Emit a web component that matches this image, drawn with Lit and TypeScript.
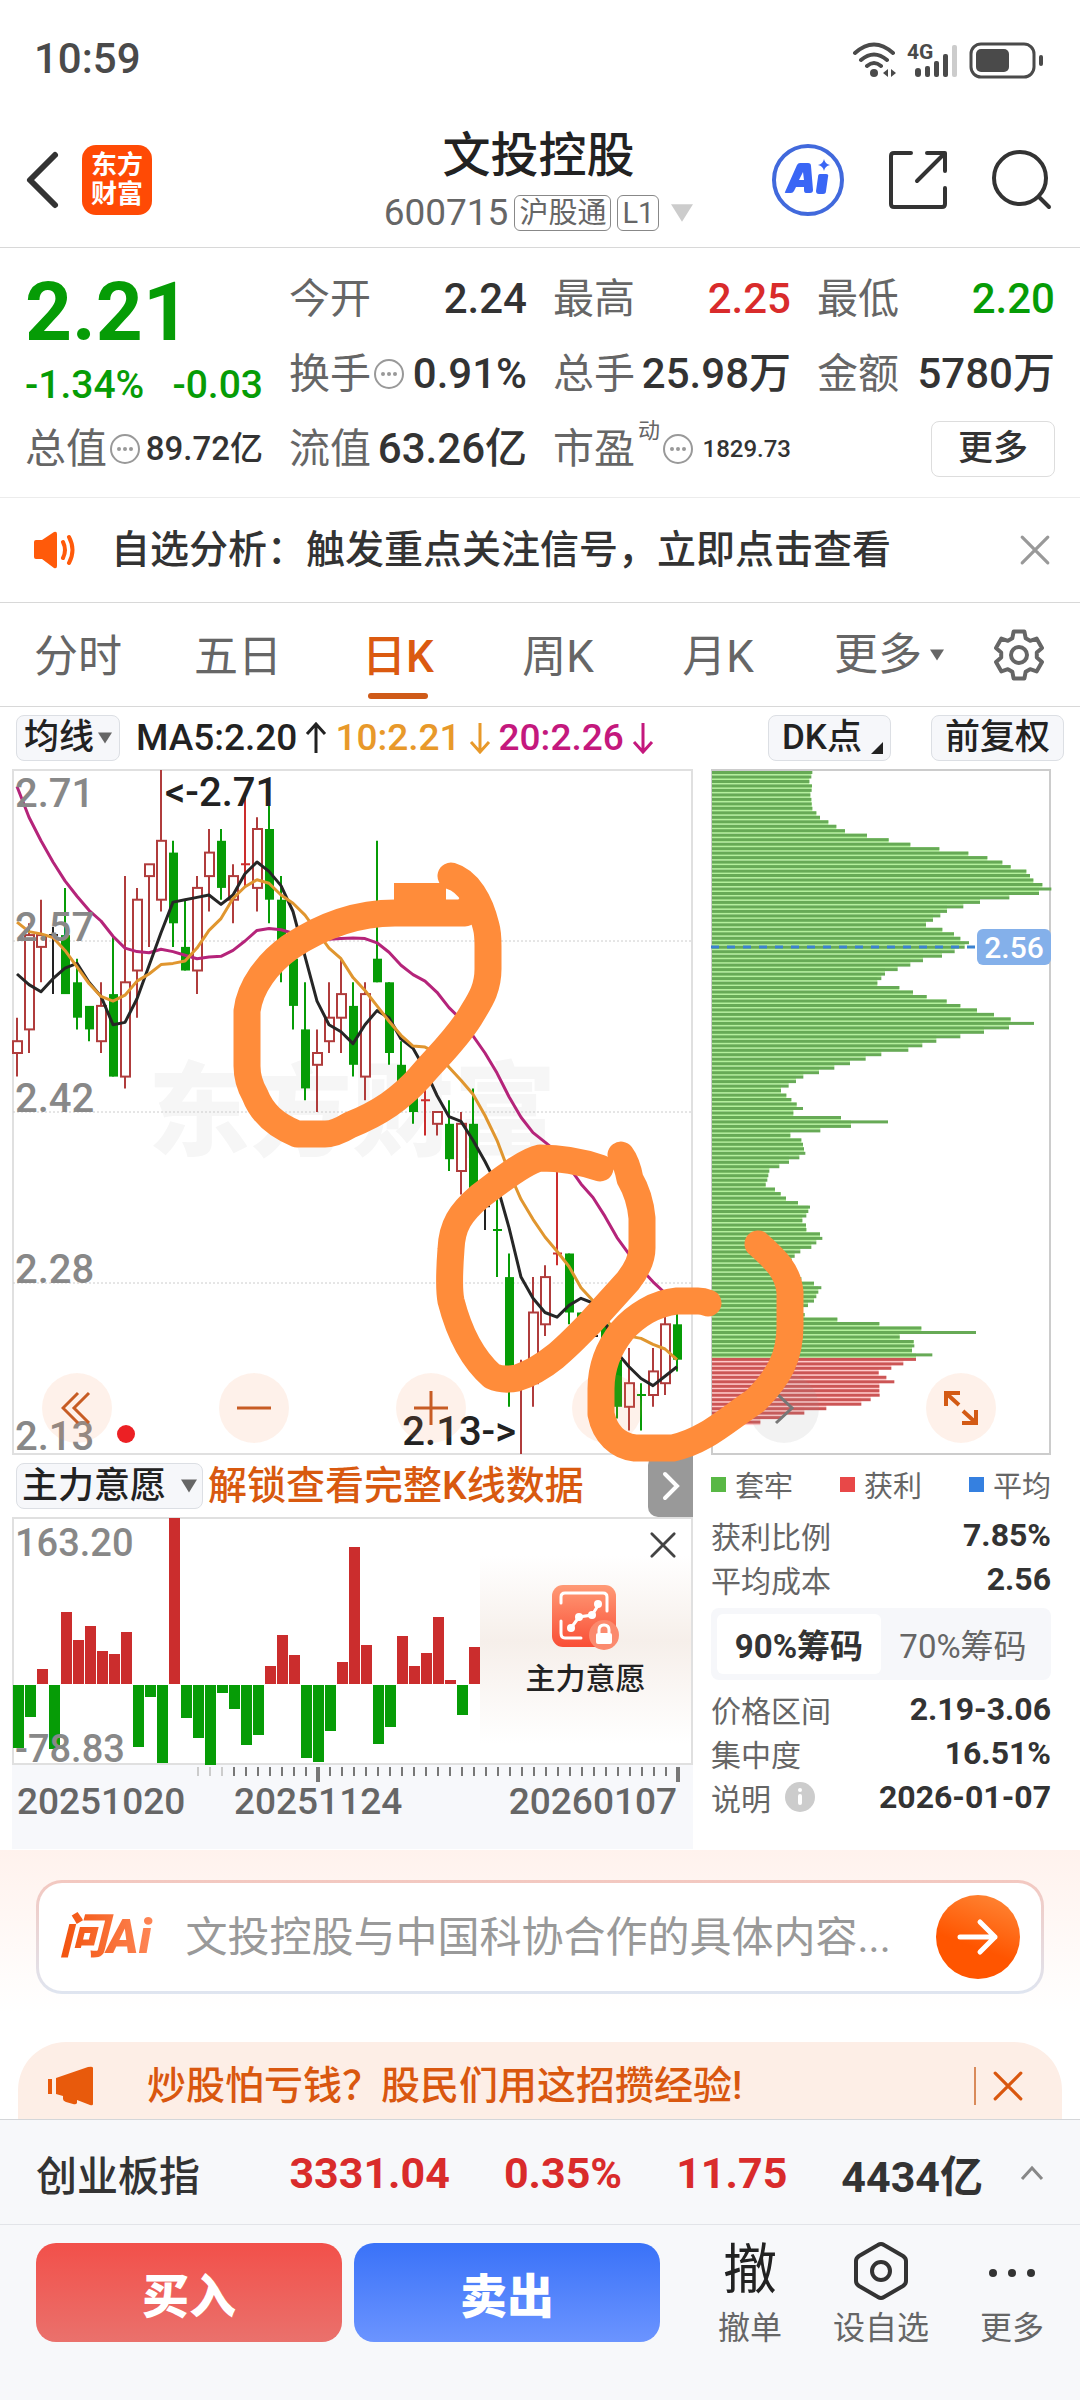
import { LitElement, html, svg, css } from "lit";
import { customElement, state } from "lit/decorators.js";

/* ---------- market data ---------- */

// open, close, high, low for each trading day
const CANDLES: [number, number, number, number][] = [
  [2.47, 2.48, 2.5, 2.45], [2.49, 2.57, 2.58, 2.47], [2.56, 2.57, 2.6, 2.53], [2.57, 2.57, 2.577, 2.52],
  [2.57, 2.52, 2.61, 2.52], [2.53, 2.5, 2.55, 2.49], [2.51, 2.49, 2.51, 2.48], [2.48, 2.51, 2.53, 2.47],
  [2.52, 2.45, 2.57, 2.45], [2.45, 2.53, 2.62, 2.44], [2.54, 2.6, 2.61, 2.5], [2.62, 2.63, 2.63, 2.56],
  [2.6, 2.65, 2.71, 2.59], [2.64, 2.58, 2.65, 2.56], [2.56, 2.54, 2.6, 2.54], [2.54, 2.61, 2.62, 2.52],
  [2.62, 2.64, 2.66, 2.59], [2.65, 2.61, 2.66, 2.6], [2.6, 2.62, 2.63, 2.58], [2.63, 2.63, 2.69, 2.61],
  [2.61, 2.66, 2.67, 2.59], [2.66, 2.6, 2.68, 2.58], [2.6, 2.55, 2.62, 2.53], [2.55, 2.51, 2.55, 2.49],
  [2.49, 2.44, 2.53, 2.43], [2.46, 2.47, 2.49, 2.42], [2.48, 2.5, 2.53, 2.47], [2.5, 2.52, 2.55, 2.47],
  [2.51, 2.46, 2.53, 2.45], [2.45, 2.52, 2.53, 2.43], [2.55, 2.53, 2.65, 2.53], [2.53, 2.47, 2.53, 2.46],
  [2.46, 2.43, 2.48, 2.43], [2.45, 2.42, 2.45, 2.41], [2.43, 2.43, 2.45, 2.4], [2.41, 2.42, 2.42, 2.4],
  [2.41, 2.38, 2.43, 2.37], [2.37, 2.41, 2.42, 2.35], [2.41, 2.34, 2.44, 2.34], [2.34, 2.34, 2.35, 2.32],
  [2.32, 2.32, 2.35, 2.28], [2.28, 2.2, 2.3, 2.17], [2.19, 2.2, 2.21, 2.13], [2.19, 2.25, 2.28, 2.17],
  [2.24, 2.28, 2.29, 2.23], [2.3, 2.3, 2.38, 2.29], [2.3, 2.25, 2.3, 2.24], [2.25, 2.23, 2.25, 2.22],
  [2.23, 2.23, 2.24, 2.23], [2.24, 2.2, 2.25, 2.2], [2.21, 2.17, 2.22, 2.16], [2.17, 2.19, 2.22, 2.15],
  [2.18, 2.18, 2.19, 2.15], [2.18, 2.2, 2.22, 2.17], [2.19, 2.24, 2.25, 2.18], [2.24, 2.21, 2.25, 2.2],
];
const FLAT_RED = new Set([19, 34, 45]);
const FLAT_GREEN = new Set([40, 52]);

// averages for the first days, whose window starts before the visible range
const MA5_HEAD = [2.537, 2.528, 2.522, 2.533];
const MA10_HEAD = [2.581, 2.573, 2.571, 2.568, 2.557, 2.543, 2.529, 2.518, 2.514];
const MA20_HEAD = [
  2.696, 2.67, 2.65, 2.632, 2.616, 2.603, 2.591, 2.582, 2.569, 2.559,
  2.556, 2.555, 2.558, 2.556, 2.553, 2.55, 2.5515, 2.552, 2.557,
];

// shares held at each price level, in thirds of a chart unit
const CHIPS_RAW = [
  301, 298, 292, 300, 299, 295, 298, 299, 301, 313, 324, 349, 373, 399, 465, 530, 595, 682, 769, 826, 871, 896, 943, 954,
  964, 991, 1018, 981, 892, 804, 754, 705, 685, 663, 642, 691, 726, 745, 771, 758, 728, 690, 633, 595, 557, 519, 508, 496,
  562, 603, 644, 704, 745, 795, 846, 896, 966, 891, 816, 745, 673, 631, 589, 508, 461, 414, 367, 321, 274, 252, 230, 207,
  223, 238, 254, 273, 244, 387, 528, 417, 325, 235, 268, 273, 276, 280, 262, 231, 202, 172, 169, 166, 161, 189, 206, 222,
  258, 294, 289, 283, 271, 282, 283, 324, 331, 313, 298, 265, 248, 240, 236, 240, 252, 268, 306, 328, 319, 313, 306, 288,
  273, 278, 376, 502, 628, 792, 563, 605, 607, 600, 661, 612, 574, 538, 500, 523, 547, 502, 502, 503, 476, 448, 343, 277,
  210, 145,
];
const CHIPS_IN_LOSS = 131;

const INTENT = [
  -63, -32, 15, -64, 72, 44, 58, 33, 30, 52, -62, -12, -78, 166, -33, -53, -80, -8, -24, -60, -50, 18, 49, 29, -73, -77,
  -46, 22, 137, 39, -59, -42, 48, 18, 31, 67, 4, -30, 37, 14,
];

const RED = "#cb2d2d";
const GREEN = "#069c06";

const movingAverage = (days: number, head: number[]) =>
  CANDLES.map((_, i) =>
    i < days - 1 ? head[i] : CANDLES.slice(i - days + 1, i + 1).reduce((sum, c) => sum + c[1], 0) / days
  );

const px = (i: number) => 5 + i * 12;
const py = (price: number) => Math.round((2.71 - price) * 11793) / 10 + 1;
const points = (values: number[]) => values.map((v, i) => `${px(i)},${py(v)}`).join(" ");

/* ---------- icons ---------- */

const gearPoints = Array.from({ length: 6 }, (_, k) =>
  [[-22, 18], [-13, 24], [13, 24], [22, 18]].map(([da, r]) => {
    const a = ((k * 60 - 90 + da) * Math.PI) / 180;
    return `${(27 + r * Math.cos(a)).toFixed(1)},${(27 + r * Math.sin(a)).toFixed(1)}`;
  }).join(" ")
).join(" ");

const icon = {
  back: html`<svg width="36" height="60" viewBox="0 0 36 60" fill="none" stroke="#333" stroke-width="6" stroke-linecap="round" stroke-linejoin="round"><path d="M31 5 6 30 31 55" /></svg>`,
  ai: html`<svg width="74" height="74" viewBox="0 0 74 74"><circle cx="37" cy="37" r="34" fill="#fff" stroke="#4169dc" stroke-width="4" />
    <path fill="#3a66f5" fill-rule="evenodd" d="M14 49 26 22q1-2 3-2h8q3 0 3 3l2 24q0 3-3 3h-4q-2 0-2-3v-3h-8l-2 4q-1 2-3 2h-4q-3 0-2-1zM28 37h5l-1-8z" />
    <path fill="#3a66f5" d="M49 31h6q3 0 2 3l-2 14q0 3-3 3h-4q-3 0-3-3l2-14q0-3 2-3zM53 16q1 5 6 6-5 1-6 6-1-5-6-6 5-1 6-6z" /></svg>`,
  share: html`<svg width="60" height="60" viewBox="0 0 60 60" fill="none" stroke="#333" stroke-width="4" stroke-linecap="round" stroke-linejoin="round"><path d="M23 3H6q-3 0-3 3v48q0 3 3 3h48q3 0 3-3V38M39 3h18v18M56 4 29 31" /></svg>`,
  search: html`<svg width="62" height="62" viewBox="0 0 62 62" fill="none" stroke="#333" stroke-width="4" stroke-linecap="round"><circle cx="29" cy="29" r="26" /><path d="M48 48 58 58" /></svg>`,
  status: html`<svg width="192" height="40" viewBox="0 0 192 40">
    <g fill="none" stroke="#4a4a4a" stroke-width="4" stroke-linecap="round"><path d="M3 14q19-17 38 0M9 21q13-11 26 0M15 27q7-6 14 0" /></g>
    <circle cx="22" cy="34" r="4" fill="#4a4a4a" /><path d="M31 34l5-4v8zM44 34l-5-4v8z" fill="#4a4a4a" />
    <text x="55" y="20" font-family="Roboto, sans-serif" font-size="21" font-weight="700" fill="#4a4a4a">4G</text>
    <g fill="#4a4a4a"><rect x="63" y="29" width="6" height="9" rx="3" /><rect x="73" y="27" width="5" height="11" rx="2" /><rect x="82" y="22" width="5" height="16" rx="2" /><rect x="91" y="15" width="5" height="23" rx="2" /></g>
    <rect x="100" y="6" width="5" height="32" rx="2" fill="#ccc" />
    <rect x="119" y="5" width="63" height="33" rx="10" fill="none" stroke="#4a4a4a" stroke-width="3" />
    <rect x="124" y="10" width="33" height="23" rx="5" fill="#4a4a4a" /><rect x="187" y="16" width="4" height="11" rx="2" fill="#4a4a4a" /></svg>`,
  speaker: html`<svg width="46" height="38" viewBox="0 0 46 38"><path d="M2 11q0-2 2-2h6L22 1q3-1 3 2v32q0 3-3 2L10 28H4q-2 0-2-2z" fill="#ff5a0a" /><path d="M31 11q4 8 0 16M37 6q7 13 0 26" fill="none" stroke="#ff5a0a" stroke-width="4" stroke-linecap="round" /></svg>`,
  gear: html`<svg width="54" height="54" viewBox="0 0 54 54" fill="none" stroke="#666" stroke-width="4" stroke-linejoin="round"><polygon points="${gearPoints}" /><circle cx="27" cy="27" r="8" /></svg>`,
  note: html`<svg width="30" height="30" viewBox="0 0 30 30"><circle cx="15" cy="15" r="14" fill="none" stroke="#999" stroke-width="2" /><g fill="#999"><circle cx="9" cy="15" r="2" /><circle cx="15" cy="15" r="2" /><circle cx="21" cy="15" r="2" /></g></svg>`,
  send: html`<svg width="42" height="38" viewBox="0 0 42 38" fill="none" stroke="#fff" stroke-width="5" stroke-linecap="round" stroke-linejoin="round"><path d="M3 19h35M23 4l15 15-15 15" /></svg>`,
  horn: html`<svg width="46" height="40" viewBox="0 0 46 40" fill="#e85a0c"><path d="M0 13h4v15H0zM8 12 40 1q5-1 5 1v36q0 2-3 1l-13-5v3q-1 2-4 1l-7-2q-3-1-3-3v-3l-7-2z" /></svg>`,
  lock: html`<svg width="68" height="68" viewBox="0 0 68 68"><defs><linearGradient id="lg" x1="0" y1="0" x2="0" y2="1"><stop offset="0" stop-color="#ff9a76" /><stop offset="1" stop-color="#f94e36" /></linearGradient></defs>
    <rect x="1" y="2" width="64" height="62" rx="11" fill="url(#lg)" />
    <path d="M10 20v-6q0-4 4-4h38q4 0 4 4v14M10 38v12q0 5 4 5h16" fill="none" stroke="#fff" stroke-width="3" stroke-linecap="round" />
    <path d="M20 45 28 34 41 32 48 21" fill="none" stroke="#fff" stroke-width="3" /><g fill="#fff"><circle cx="20" cy="45" r="4" /><circle cx="28" cy="34" r="4" /><circle cx="41" cy="32" r="4" /><circle cx="47" cy="21" r="4" /></g>
    <circle cx="53" cy="52" r="15" fill="#fb8a6e" /><rect x="45" y="50" width="16" height="11" rx="2" fill="#fff" /><path d="M48 50v-3q0-5 5-5t5 5v3" fill="none" stroke="#fff" stroke-width="3" /></svg>`,
  hex: html`<svg width="56" height="60" viewBox="0 0 56 60" fill="none" stroke="#333" stroke-width="4" stroke-linejoin="round"><path d="M25 4q3-2 6 0l19 11q3 2 3 5v20q0 3-3 5L31 56q-3 2-6 0L6 45q-3-2-3-5V20q0-3 3-5z" /><circle cx="28" cy="30" r="9" /></svg>`,
  dots: html`<svg width="50" height="60" viewBox="0 0 50 60" fill="#333"><circle cx="6" cy="32" r="4" /><circle cx="25" cy="32" r="4" /><circle cx="44" cy="32" r="4" /></svg>`,
  info: html`<svg width="32" height="32" viewBox="0 0 32 32"><circle cx="16" cy="16" r="15" fill="#ccc" /><circle cx="16" cy="9" r="2" fill="#fff" /><rect x="14" y="13" width="4" height="11" rx="2" fill="#fff" /></svg>`,
};

const cross = (size: number, color: string) =>
  html`<svg width=${size} height=${size} viewBox="0 0 30 30" stroke=${color} stroke-width="3" stroke-linecap="round"><path d="M3 3 27 27M27 3 3 27" /></svg>`;
const caret = (w: number, color = "#666") =>
  html`<svg class="caret" width=${w} height=${w} viewBox="0 0 10 10" fill=${color}><path d="M0 1H10L5 9z" /></svg>`;
const arrow = (down: boolean, color: string) =>
  html`<svg width="24" height="32" viewBox="0 0 24 32" fill="none" stroke=${color} stroke-width="3"><path d=${down ? "M12 1V30M3 20l9 10 9-10" : "M12 31V2M3 12l9-10 9 10"} /></svg>`;

@customElement("app-root")
export class AppRoot extends LitElement {
  @state() private period = "日K";
  @state() private chipRange = "90%筹码";

  static styles = css`
    :host { display: block; color: #333; font-family: Roboto, "Noto Sans CJK SC", sans-serif; font-weight: 500; }
    * { box-sizing: border-box; }
    svg { display: block; flex: none; }
    button, select, input { font: inherit; color: inherit; border: 0; margin: 0; padding: 0; background: none; border-radius: 0; }
    button { cursor: pointer; }
    select { appearance: none; outline: 0; }
    a { color: inherit; text-decoration: none; }
    dl, dd, dt, h1, p { margin: 0; font-size: inherit; font-weight: inherit; }
    .app { display: flex; flex-direction: column; height: 100vh; background: #fff; overflow: hidden; }
    .scroll { flex: 1; min-height: 0; overflow: hidden; }

    .status { display: flex; justify-content: space-between; align-items: center; padding: 37px 36px 0 34px; font-size: 42px; line-height: 44px; color: #4a4a4a; }
    .header { display: grid; grid-template-columns: 1fr auto 1fr; align-items: center; height: 167px; padding: 31px 27px 0 24px; border-bottom: 1px solid #d8d8d8; }
    .brand, .actions { display: flex; align-items: center; }
    .brand { gap: 22px; }
    .actions { justify-content: flex-end; gap: 43px; }
    .logo { display: grid; place-content: center; width: 70px; height: 70px; border-radius: 14px; background: #ff4a05; color: #fff; font-size: 26px; line-height: 29px; font-weight: 700; }
    .title { display: flex; flex-direction: column; align-items: center; gap: 4px; }
    .title h1 { font-size: 48px; line-height: 62px; color: #222; }
    .code { display: flex; align-items: center; gap: 6px; font-size: 37px; line-height: 44px; color: #666; font-weight: 400; }
    .tag { border: 1px solid #888; border-radius: 6px; padding: 0 4px; font-size: 29px; line-height: 34px; }
    .code .caret { margin-left: 6px; }

    .quote { display: grid; grid-template-columns: repeat(4, 1fr); grid-auto-rows: 75px; column-gap: 26px; padding: 13px 25px 11px; border-bottom: 1px solid #ececec; }
    .price { grid-row: span 2; color: #069c06; padding-top: 8px; }
    .price b { display: block; font-size: 82px; line-height: 86px; font-weight: 700; }
    .change { display: flex; justify-content: space-between; font-size: 39px; line-height: 60px; }
    .cell { display: flex; align-items: center; justify-content: space-between; font-size: 42px; line-height: 60px; white-space: nowrap; }
    .cell dt { display: flex; align-items: center; color: #666; font-weight: 400; font-size: 41px; gap: 3px; }
    .cell sup { align-self: flex-start; font-size: 22px; line-height: 24px; }
    .cell .small { font-size: 33px; }
    .cell .tiny { font-size: 24px; }
    .up { color: #d92b2b; }
    .down { color: #069c06; }
    .more { margin-left: auto; width: 124px; height: 56px; border: 1px solid #ddd; border-radius: 8px; font-size: 35px; line-height: 50px; }

    .notice { display: flex; align-items: center; height: 105px; padding: 0 29px 0 32px; border-bottom: 1px solid #d8d8d8; font-size: 39px; line-height: 60px; gap: 33px; }
    .notice button { margin-left: auto; }
    .tabs { display: flex; align-items: stretch; justify-content: space-between; height: 104px; padding: 0 34px; border-bottom: 1px solid #d8d8d8; font-size: 44px; color: #666; font-weight: 400; }
    .periods { display: flex; gap: 72px; }
    .periods button { position: relative; min-width: 88px; padding-bottom: 4px; }
    .tabs .on { color: #db5a10; font-weight: 500; }
    .tabs .on::after { content: ""; position: absolute; left: 50%; bottom: 7px; width: 60px; height: 6px; margin-left: -30px; border-radius: 3px; background: #cf5a18; }
    .pick { display: flex; align-items: center; gap: 8px; }
    .pick select { line-height: 60px; height: 60px; }

    .indicators { display: flex; align-items: center; height: 62px; padding: 0 16px; font-size: 37px; line-height: 44px; }
    .box { display: flex; align-items: center; height: 46px; border: 1px solid #dcdfe4; border-radius: 8px; background: #f6f7fa; padding: 0 7px; font-size: 35px; gap: 3px; color: #222; }
    .box select { height: 44px; line-height: 44px; }
    .ma { display: flex; align-items: center; gap: 7px; margin-left: 16px; white-space: nowrap; }
    .ma span:first-child { color: #222; }
    .ma .ten { color: #e8992a; }
    .ma .twenty { color: #c4187d; }
    .dk { margin-left: auto; margin-right: 40px; padding: 0 7px 0 13px; }
    .adjust { padding: 0 13px; }
    .corner { width: 0; height: 0; border-left: 12px solid transparent; border-bottom: 12px solid #222; align-self: flex-end; margin: 0 0 6px 6px; }

    .market { position: relative; display: grid; grid-template-columns: 681fr 340fr; column-gap: 18px; padding: 0 29px 0 12px; }
    .market svg.fluid { width: 100%; height: auto; overflow: visible; }
    .overlay { position: absolute; left: 0; top: 0; width: 100%; height: auto; pointer-events: none; }
    .tools { position: absolute; left: 0; right: 0; top: 604px; display: flex; justify-content: space-between; padding: 0 84px 0 42px; }
    .tools button { display: grid; place-items: center; width: 70px; height: 70px; border-radius: 50%; background: rgba(250, 138, 80, 0.12); }
    .tools .gray { background: rgba(150, 150, 150, 0.12); }
    .unlock { display: flex; align-items: center; height: 62px; padding-left: 4px; gap: 5px; }
    .unlock .box { width: 187px; font-size: 36px; gap: 14px; padding: 0 5px; }
    .unlock a { color: #d8590f; font-size: 39px; line-height: 56px; white-space: nowrap; }
    .unlock .next { margin-left: auto; display: grid; place-items: center; width: 45px; height: 62px; border-radius: 10px 0 0 10px; background: #999; }
    .intent { position: relative; }
    .gate { position: absolute; top: 2px; right: 2px; bottom: 2px; width: 31%; display: flex; flex-direction: column; align-items: center; justify-content: center; padding-top: 5px; gap: 3px; background: linear-gradient(#fff 15%, #f6efea 50%, #fff 92%); font-size: 30px; line-height: 50px; color: #222; }
    .gate .x { position: absolute; top: 12px; right: 14px; }

    .legend { display: flex; justify-content: space-between; align-items: center; height: 58px; font-size: 29px; color: #666; font-weight: 400; }
    .legend span { display: flex; align-items: center; gap: 9px; }
    .legend i { width: 15px; height: 15px; }
    .green { background: #59b845; }
    .rose { background: #e84848; }
    .blue { background: #3580e0; }
    .stat { display: flex; justify-content: space-between; align-items: center; height: 44px; font-size: 32px; white-space: nowrap; }
    .stat dt { display: flex; align-items: center; gap: 13px; font-size: 30px; font-weight: 400; color: #666; }
    .stat dd { font-weight: 700; }
    .chips { display: flex; height: 72px; margin: 7px 0; padding: 6px; border-radius: 8px; background: #f6f7fa; font-size: 33px; }
    .chips button { flex: 1; font-weight: 400; color: #666; border-radius: 6px; }
    .chips .on { background: #fff; font-weight: 700; color: #333; }

    .ask { padding: 30px 36px 48px; margin-top: 1px; background: linear-gradient(#fff2ed, #fff 85%); }
    .askbox { display: flex; align-items: center; height: 114px; padding: 0 21px 0 20px; gap: 26px; border: 3px solid transparent; border-radius: 26px; background: linear-gradient(#fff, #fff) padding-box, linear-gradient(#f3c8c0, #dfe5f0) border-box; }
    .asklogo { font-size: 48px; line-height: 60px; font-weight: 900; font-style: italic; background: linear-gradient(90deg, #f2520c, #ff8a5c); -webkit-background-clip: text; background-clip: text; color: transparent; padding-right: 8px; }
    .askbox input { flex: 1; min-width: 0; height: 70px; font-size: 42px; font-weight: 400; outline: 0; }
    .askbox input::placeholder { color: #999; opacity: 1; }
    .send { display: grid; place-items: center; width: 84px; height: 84px; border-radius: 50%; background: linear-gradient(200deg, #ff8a3a, #ff5500 60%); }
    .promo { display: flex; align-items: center; height: 88px; margin: 0 18px; padding: 0 38px 0 30px; border-radius: 48px 48px 0 0; background: #fdeee6; color: #d9570f; font-size: 39px; line-height: 60px; }
    .promo a { margin-left: 53px; }
    .promo button { margin-left: auto; padding-left: 16px; border-left: 2px solid #d98a5a; height: 38px; display: flex; align-items: center; }

    .footer { background: #f7f8fa; border-top: 1px solid #d4d6d9; }
    .index { display: flex; align-items: center; height: 105px; padding: 2px 36px 0; gap: 54px; border-bottom: 1px solid #e2e4e8; font-size: 43px; font-weight: 700; white-space: nowrap; }
    .index .name { font-weight: 500; margin-right: auto; font-size: 41px; }
    .index button { margin-left: -17px; }
    .trade { display: flex; align-items: flex-start; gap: 12px; padding: 18px 36px 50px; }
    .buy, .sell { flex: 1; height: 99px; border-radius: 20px; color: #fff; font-size: 47px; font-weight: 900; }
    .buy { background: linear-gradient(#f2504a, #ea716c); }
    .sell { background: linear-gradient(#3a72f8, #6b94ff); }
    .acts { display: flex; gap: 51px; margin-left: 46px; color: #666; font-size: 32px; font-weight: 400; line-height: 44px; }
    .acts button { display: flex; flex-direction: column; align-items: center; gap: 5px; margin-top: -2px; }
    .acts b { font-size: 54px; line-height: 60px; font-weight: 400; color: #222; }
  `;

  private renderCandle([open, close, high, low]: [number, number, number, number], i: number) {
    const x = px(i);
    if (open === close) {
      const color = FLAT_RED.has(i) ? RED : FLAT_GREEN.has(i) ? GREEN : "#222";
      return svg`<path d="M${x} ${py(high)}V${py(low)}M${x - 4} ${py(open)}h9" stroke=${color} stroke-width="2" />`;
    }
    const top = py(Math.max(open, close));
    const bottom = py(Math.min(open, close));
    return close > open
      ? svg`<path d="M${x} ${py(high)}V${top}M${x} ${bottom}V${py(low)}" stroke="#b03c3c" stroke-width="2" />
          <rect x=${x - 4} y=${top} width="9" height=${bottom - top} fill="#fff" stroke="#b03c3c" stroke-width="2" />`
      : svg`<path d="M${x} ${py(high)}V${py(low)}" stroke=${GREEN} stroke-width="2" />
          <rect x=${x - 4} y=${top} width="9" height=${bottom - top} fill=${GREEN} />`;
  }

  private renderKLine() {
    const label = (y: number, t: string) => svg`<text x="3" y=${y} fill="#888">${t}</text>`;
    return html`<svg class="fluid" viewBox="0 0 681 686" font-family="Roboto, 'Noto Sans CJK SC', sans-serif" font-size="40" font-weight="500">
      <rect x="1" y="1" width="679" height="684" fill="#fff" stroke="#e0e0e0" stroke-width="2" />
      <text x="136" y="379" font-size="102" font-weight="900" fill="#f6f6f6">东方财富</text>
      ${[172, 343, 514].map((y) => svg`<path d="M1 ${y}H680" stroke="#ccc" stroke-dasharray="2 2" />`)}
      ${CANDLES.map((c, i) => this.renderCandle(c, i))}
      <g fill="none" stroke-width="3" stroke-linejoin="round">
        <polyline points=${points(movingAverage(20, MA20_HEAD))} stroke="#b5247a" />
        <polyline points=${points(movingAverage(5, MA5_HEAD))} stroke="#262626" />
        <polyline points=${points(movingAverage(10, MA10_HEAD))} stroke="#e0962f" />
      </g>
      ${label(38, "2.71")}${label(172, "2.57")}${label(343, "2.42")}${label(514, "2.28")}${label(681, "2.13")}
      <text x="153" y="37" fill="#222">&lt;-2.71</text>
      <text x="504" y="676" text-anchor="end" fill="#222">2.13-&gt;</text>
      <circle cx="114" cy="665" r="9" fill="#ec2024" />
    </svg>`;
  }

  private renderChips() {
    return html`<svg class="fluid" viewBox="0 0 340 686">
      <rect x="1" y="1" width="338" height="684" fill="#fff" stroke="#ccc" stroke-width="2" />
      ${CHIPS_RAW.map((v, i) => {
        const loss = i < CHIPS_IN_LOSS;
        const y = (2 + i * 4.48).toFixed(1);
        const next = Math.min(v, CHIPS_RAW[i + 1] ?? v) / 3;
        return svg`<rect x="1" y=${y} width=${next} height="4.5" fill=${loss ? "#b4f09c" : "#ffc9c9"} />
          <rect x="1" y=${y} width=${v / 3} height="3" fill=${loss ? "#67aa56" : "#cc5555"} />`;
      })}
      <path d="M0 178H264" stroke="#3b82d0" stroke-width="3" stroke-dasharray="8 8" />
      <rect x="266" y="160" width="74" height="36" rx="6" fill="#84b0ea" />
      <text x="303" y="189" text-anchor="middle" font-family="Roboto, sans-serif" font-size="30" font-weight="500" fill="#fff">2.56</text>
    </svg>`;
  }

  private renderIntent() {
    return html`<svg class="fluid" viewBox="0 0 681 248" font-family="Roboto, sans-serif" font-weight="500">
      <rect x="1" y="1" width="679" height="246" fill="#fff" stroke="#e0e0e0" stroke-width="2" />
      ${INTENT.map((v, i) => svg`<rect x=${1 + i * 12} y=${v > 0 ? 167 - v : 168} width=${i === 39 ? 2 : 11} height=${Math.abs(v)} fill=${v > 0 ? RED : GREEN} />`)}
      <text x="3" y="39" font-size="38" fill="#888">163.20</text>
      <text x="3" y="245" font-size="38" fill="#888">-78.83</text>
    </svg>`;
  }

  private renderAxis() {
    return html`<svg class="fluid" viewBox="0 0 681 84" font-family="Roboto, sans-serif" font-weight="500">
      <rect width="681" height="84" fill="#f7f8fb" />
      ${Array.from({ length: 41 }, (_, i) => {
        const major = i === 10 || i === 40;
        return svg`<path d="M${186 + i * 12} 2v${major ? 15 : 9}" stroke=${i < 3 ? "#ccc" : "#777"} stroke-width=${major ? 4 : 2} />`;
      })}
      <g font-size="37" fill="#666"><text x="5" y="49">20251020</text><text x="222" y="49">20251124</text><text x="665" y="49" text-anchor="end">20260107</text></g>
    </svg>`;
  }

  private stat(name: unknown, value: string) {
    return html`<div class="stat"><dt>${name}</dt><dd>${value}</dd></div>`;
  }

  private cell(name: unknown, value: string, cls = "") {
    return html`<div class="cell"><dt>${name}</dt><dd class=${cls}>${value}</dd></div>`;
  }

  render() {
    return html`<div class="app">
      <main class="scroll">
        <div class="status"><span>10:59</span>${icon.status}</div>
        <header class="header">
          <div class="brand"><button aria-label="返回">${icon.back}</button><a class="logo" href="#">东方<br />财富</a></div>
          <div class="title">
            <h1>文投控股</h1>
            <div class="code">600715 <span class="tag">沪股通</span><span class="tag">L1</span>${caret(22, "#ccc")}</div>
          </div>
          <div class="actions"><button aria-label="Ai">${icon.ai}</button><button aria-label="分享">${icon.share}</button><button aria-label="搜索">${icon.search}</button></div>
        </header>

        <dl class="quote">
          <div class="price"><b>2.21</b><div class="change"><span>-1.34%</span><span>-0.03</span></div></div>
          ${this.cell("今开", "2.24")}${this.cell("最高", "2.25", "up")}${this.cell("最低", "2.20", "down")}
          ${this.cell(html`换手${icon.note}`, "0.91%")}${this.cell("总手", "25.98万")}${this.cell("金额", "5780万")}
          ${this.cell(html`总值${icon.note}`, "89.72亿", "small")}${this.cell("流值", "63.26亿")}
          ${this.cell(html`市盈<sup>动</sup>${icon.note}`, "1829.73", "tiny")}
          <div class="cell"><button class="more">更多</button></div>
        </dl>

        <section class="notice">${icon.speaker}<a href="#">自选分析：触发重点关注信号，立即点击查看</a><button aria-label="关闭">${cross(32, "#999")}</button></section>

        <nav class="tabs">
          <div class="periods">
            ${["分时", "五日", "日K", "周K", "月K"].map(
              (t) => html`<button class=${t === this.period ? "on" : ""} @click=${() => (this.period = t)}>${t}</button>`
            )}
            <span class="pick"><select aria-label="更多周期"><option>更多</option></select>${caret(14)}</span>
          </div>
          <button aria-label="设置">${icon.gear}</button>
        </nav>

        <div class="indicators">
          <span class="box"><select aria-label="主图指标"><option>均线</option></select>${caret(14)}</span>
          <div class="ma"><span>MA5:2.20</span>${arrow(false, "#222")}<span class="ten">10:2.21</span>${arrow(true, "#e8992a")}<span class="twenty">20:2.26</span>${arrow(true, "#c4187d")}</div>
          <button class="box dk">DK点<i class="corner"></i></button><button class="box adjust">前复权</button>
        </div>

        <section class="market">
          <div>
            ${this.renderKLine()}
            <div class="unlock">
              <span class="box"><select aria-label="副图指标"><option>主力意愿</option></select>${caret(16)}</span>
              <a href="#">解锁查看完整K线数据</a>
              <button class="next" aria-label="下一个"><svg width="20" height="30" viewBox="0 0 20 30" fill="none" stroke="#fff" stroke-width="4" stroke-linecap="round"><path d="M4 3 16 15 4 27" /></svg></button>
            </div>
            <div class="intent">
              ${this.renderIntent()}
              <div class="gate"><button class="x" aria-label="关闭">${cross(28, "#444")}</button>${icon.lock}<span>主力意愿</span></div>
            </div>
            ${this.renderAxis()}
          </div>
          <div>
            ${this.renderChips()}
            <div class="legend"><span><i class="green"></i>套牢</span><span><i class="rose"></i>获利</span><span><i class="blue"></i>平均</span></div>
            <dl>${this.stat("获利比例", "7.85%")}${this.stat("平均成本", "2.56")}</dl>
            <div class="chips">
              ${["90%筹码", "70%筹码"].map(
                (t) => html`<button class=${t === this.chipRange ? "on" : ""} @click=${() => (this.chipRange = t)}>${t}</button>`
              )}
            </div>
            <dl>${this.stat("价格区间", "2.19-3.06")}${this.stat("集中度", "16.51%")}${this.stat(html`说明${icon.info}`, "2026-01-07")}</dl>
          </div>
          <div class="tools">
            <button aria-label="最早"><svg width="32" height="34" viewBox="0 0 32 34" fill="none" stroke="#c75c24" stroke-width="3"><path d="M17 2 2 17 17 32M28 2 13 17 28 32" /></svg></button>
            <button aria-label="缩小"><svg width="34" height="34" viewBox="0 0 34 34" stroke="#c75c24" stroke-width="3"><path d="M0 17H34" /></svg></button>
            <button aria-label="放大"><svg width="34" height="34" viewBox="0 0 34 34" stroke="#c75c24" stroke-width="3"><path d="M0 17H34M17 0V34" /></svg></button>
            <button aria-label="后退"></button>
            <button class="gray" aria-label="前进"><svg width="20" height="34" viewBox="0 0 20 34" fill="none" stroke="#777" stroke-width="3"><path d="M2 2 18 17 2 32" /></svg></button>
            <button aria-label="全屏"><svg width="34" height="34" viewBox="0 0 34 34" fill="none" stroke="#d35a14" stroke-width="4"><path d="M2 15V2H16M3 3 15 14M32 19V32H18M31 31 19 20" /></svg></button>
          </div>
          <svg class="overlay" viewBox="0 768 1080 700" fill="none" stroke="#ff8c3a" stroke-width="27" stroke-linecap="round" stroke-linejoin="round">
            <path d="M451 875C468 880 480 900 486 925Q488 932 488 945V968C488 990 478 1002 470 1016C455 1040 435 1058 420 1076C400 1098 380 1112 350 1124Q335 1133 325 1133H297C275 1124 262 1112 255 1094Q247 1080 247 1065V1010C250 985 268 962 290 946C320 926 355 912 395 912H465L474 900" />
            <path d="M394 882H446V912H394z" fill="#ff8c3a" stroke="none" />
            <path d="M600 1167Q570 1157 540 1157C525 1160 500 1180 480 1195C460 1212 452 1225 451 1248C449 1275 449 1290 451 1300C460 1335 475 1360 492 1375Q503 1380 517 1377C545 1368 565 1348 590 1322L628 1280Q642 1262 642 1247V1217Q640 1195 630 1178Q627 1162 621 1154" />
            <path d="M708 1302Q703 1300 698 1300H677C655 1302 635 1315 622 1330C610 1345 601 1365 601 1388V1413C605 1433 618 1445 635 1447H673C705 1440 725 1420 755 1400C780 1375 790 1355 790 1325V1291C788 1270 775 1258 758 1243" />
          </svg>
        </section>

        <section class="ask">
          <div class="askbox"><span class="asklogo">问Ai</span><input aria-label="问Ai" placeholder="文投控股与中国科协合作的具体内容..." /><button class="send" aria-label="发送">${icon.send}</button></div>
        </section>
        <section class="promo">${icon.horn}<a href="#">炒股怕亏钱？股民们用这招攒经验!</a><button aria-label="关闭">${cross(32, "#d9570f")}</button></section>
      </main>

      <footer class="footer">
        <div class="index">
          <span class="name">创业板指</span><span class="up">3331.04</span><span class="up">0.35%</span><span class="up">11.75</span><span>4434亿</span>
          <button aria-label="展开"><svg width="24" height="16" viewBox="0 0 24 16" fill="none" stroke="#888" stroke-width="3"><path d="M2 14 12 3 22 14" /></svg></button>
        </div>
        <div class="trade">
          <button class="buy">买入</button><button class="sell">卖出</button>
          <div class="acts">
            <button><b>撤</b>撤单</button><button>${icon.hex}设自选</button><button>${icon.dots}更多</button>
          </div>
        </div>
      </footer>
    </div>`;
  }
}
